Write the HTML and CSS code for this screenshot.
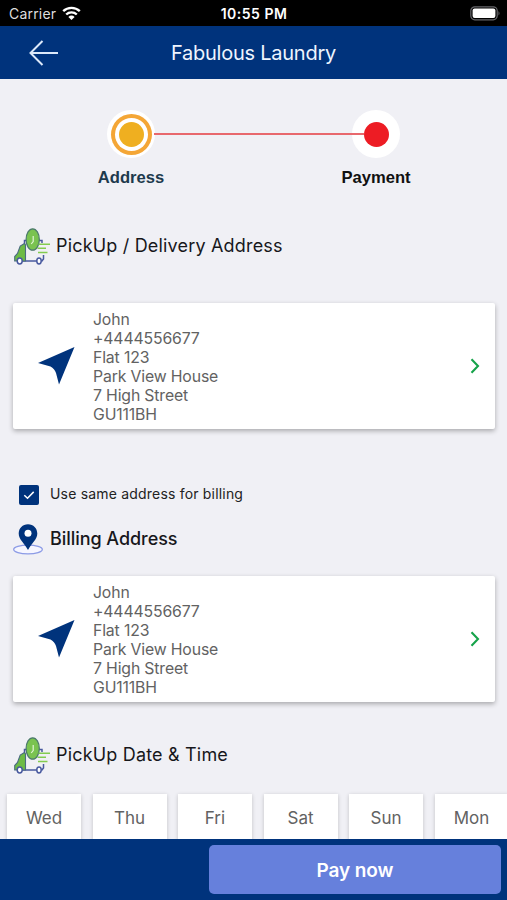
FILE: index.html
```html
<!DOCTYPE html>
<html lang="en">
<head>
    <meta charset="UTF-8">
    <meta name="viewport" content="width=device-width, initial-scale=1.0">
    <title>Fabulous Laundry</title>
    <link rel="stylesheet" href="styles.css">
</head>
<body>
    <svg width="0" height="0" class="symbols">
        <symbol id="van" viewBox="0 0 38 38">
            <path d="M11.500 17v-4.500H29V15M30.500 27v4l-2 2.500M8 33h20" fill="none" stroke="#48599f" stroke-width="1.500"/>
            <path d="M11.500 15.500L7.200 18 4.500 25.500 1.700 28.500V33h10.800V17z" fill="#6dbb45" stroke="#4a6b80" stroke-width="1.100"/>
            <ellipse cx="19.700" cy="11.500" rx="6.600" ry="10.700" fill="#7ac350" stroke="#4c7a6b" stroke-width="1.200"/>
            <path d="M20.200 8v5.500l-2 2.500" fill="none" stroke="#e3f5d5" stroke-width="1.200"/>
            <path d="M25.500 16.200H37M24.500 20.300H33M25 24.500h9.500" stroke="#83cc50" stroke-width="1.600"/>
            <ellipse cx="6.700" cy="33" rx="2.500" ry="2.900" fill="#fff" stroke="#48599f" stroke-width="1.500"/>
            <ellipse cx="26" cy="33" rx="2.200" ry="2.900" fill="#fff" stroke="#48599f" stroke-width="1.500"/>
        </symbol>
        <symbol id="arrow" viewBox="0 0 38 38">
            <path d="M36.500 0L21 37.500 18 26Q16.500 21.500 12.500 19.500L0 16z" fill="#00337c"/>
        </symbol>
        <symbol id="chevron" viewBox="0 0 10 16">
            <path d="M1.500 1.200L8 8l-6.500 6.800" fill="none" stroke="#16a34a" stroke-width="2.100"/>
        </symbol>
    </svg>

    <div class="status">
        <span class="carrier">Carrier</span>
        <svg class="wifi" width="19" height="15" viewBox="0 0 19 15">
            <path d="M1.200 5.200a12 12 0 0 1 16.600 0M4.200 8.500a7.600 7.600 0 0 1 10.600 0" fill="none" stroke="#fff" stroke-width="2.400"/>
            <path d="M9.500 14L6.400 10.900a4.400 4.400 0 0 1 6.200 0z" fill="#fff"/>
        </svg>
        <span class="clock">10:55 PM</span>
        <svg class="battery" width="31" height="15" viewBox="0 0 31 15">
            <rect x="0.800" y="0.800" width="26.400" height="13" rx="4" fill="none" stroke="#66666a" stroke-width="1.200"/>
            <rect x="2.600" y="2.600" width="22.800" height="9.400" rx="2" fill="#fff"/>
            <path d="M28.500 5q2 2.300 0 4.600z" fill="#66666a"/>
        </svg>
    </div>

    <header class="header">
        <svg width="30" height="26" viewBox="0 0 30 26">
            <path d="M13.500 1L1.500 13l12 12M1.500 13H29" fill="none" stroke="#dce9fa" stroke-width="2"/>
        </svg>
        <h1>Fabulous Laundry</h1>
    </header>

    <main class="content">
        <div class="steps">
            <div class="step active">
                <div class="dot"><i></i></div>
                <span class="step-label">Address</span>
            </div>
            <div class="line"></div>
            <div class="step">
                <div class="dot"><i></i></div>
                <span class="step-label">Payment</span>
            </div>
        </div>

        <div class="heading pickup">
            <svg width="38" height="38"><use href="#van"/></svg>
            <h2>PickUp / Delivery Address</h2>
        </div>

        <div class="card">
            <svg width="38" height="38"><use href="#arrow"/></svg>
            <p>John<br>+4444556677<br>Flat 123<br>Park View House<br>7 High Street<br>GU111BH</p>
            <svg width="10" height="16"><use href="#chevron"/></svg>
        </div>

        <div class="same-address">
            <svg width="20" height="20" viewBox="0 0 20 20">
                <rect width="20" height="20" rx="2" fill="#00337c"/>
                <path d="M5.300 10.200l3.200 3 6.200-6.300" fill="none" stroke="#fff" stroke-width="1.500"/>
            </svg>
            <span>Use same address for billing</span>
        </div>

        <div class="heading billing">
            <svg width="30" height="31" viewBox="0 0 30 31">
                <ellipse cx="15" cy="25.500" rx="14.300" ry="4.300" fill="#f6f6ff" stroke="#8c9be6" stroke-width="1.300"/>
                <path d="M15 0.200c-5.400 0-9.300 4-9.300 9.300 0 6 6 10 9.300 16.500 3.300-6.500 9.300-10.500 9.300-16.500 0-5.300-3.900-9.300-9.300-9.300z" fill="#00337c"/>
                <circle cx="15" cy="9.300" r="3.500" fill="#fff"/>
            </svg>
            <h2>Billing Address</h2>
        </div>

        <div class="card">
            <svg width="38" height="38"><use href="#arrow"/></svg>
            <p>John<br>+4444556677<br>Flat 123<br>Park View House<br>7 High Street<br>GU111BH</p>
            <svg width="10" height="16"><use href="#chevron"/></svg>
        </div>

        <div class="heading date">
            <svg width="38" height="38"><use href="#van"/></svg>
            <h2>PickUp Date &amp; Time</h2>
        </div>

        <div class="days">
            <div class="day">Wed</div>
            <div class="day">Thu</div>
            <div class="day">Fri</div>
            <div class="day">Sat</div>
            <div class="day">Sun</div>
            <div class="day">Mon</div>
        </div>
    </main>

    <footer class="footer">
        <button type="button">Pay now</button>
    </footer>
</body>
</html>
```
FILE: styles.css
```css
* {
    box-sizing: border-box;
}
body {
    margin: 0;
    height: 900px;
    display: flex;
    flex-direction: column;
    overflow: hidden;
    background: #f0f0f5;
    font-family: Inter, "Liberation Sans", sans-serif;
}
h1, h2, p {
    margin: 0;
}
svg {
    display: block;
    flex: none;
}
.symbols {
    position: absolute;
}
.status {
    height: 26px;
    flex: none;
    display: grid;
    grid-template-columns: 53px 144px 96px 1fr;
    align-items: center;
    padding: 1px 6px 0 9px;
    background: #000;
    color: #fff;
    font-size: 14px;
}
.carrier {
    color: #dedede;
    letter-spacing: 0.2px;
}
.wifi, .battery {
    margin-top: -1px;
}
.clock {
    font-weight: 600;
    letter-spacing: 0.5px;
    text-align: center;
    white-space: nowrap;
}
.battery {
    justify-self: end;
}
.header {
    height: 53px;
    flex: none;
    display: grid;
    grid-template-columns: 30px 1fr 30px;
    align-items: center;
    padding: 0 29px;
    background: #00337c;
    color: #eef5ff;
}
.header h1 {
    font-size: 20px;
    font-weight: 400;
    letter-spacing: -0.25px;
    text-align: center;
}
.content {
    flex: 1;
    min-height: 0;
    overflow: hidden;
}
.steps {
    display: flex;
    padding: 31px 107px 0;
}
.step {
    width: 48px;
    display: flex;
    flex-direction: column;
    align-items: center;
}
.dot {
    width: 48px;
    height: 48px;
    flex: none;
    display: flex;
    align-items: center;
    justify-content: center;
    border-radius: 50%;
    background: #fff;
}
.dot i {
    width: 25px;
    height: 25px;
    border-radius: 50%;
    background: #ed1c24;
}
.active .dot i {
    background: #efaf20;
    box-shadow: 0 0 0 4px #fff, 0 0 0 8px #f4a636;
}
.line {
    flex: 1;
    height: 2px;
    margin: 23px -12px 0 -1px;
    background: #e8686d;
    z-index: 1;
}
.step-label {
    margin-top: 10px;
    font: bold 16.6px/20px "Liberation Sans", sans-serif;
    color: #111;
}
.active .step-label {
    color: #1d3a4d;
}
.heading {
    display: flex;
    align-items: center;
    padding-left: 13px;
}
.heading h2 {
    font-size: 18px;
    font-weight: 400;
    line-height: 24px;
    color: #17171b;
    white-space: nowrap;
}
.pickup {
    height: 38px;
    margin-top: 40px;
}
.pickup h2, .date h2 {
    margin: -3px 0 0 5px;
    letter-spacing: 0.18px;
}
.card {
    height: 126px;
    margin: 0 12px 0 13px;
    padding: 0 15px 0 25px;
    display: flex;
    align-items: center;
    background: #fff;
    border-radius: 2px;
    box-shadow: 0 2px 5px rgba(0, 0, 0, 0.3);
}
.pickup + .card {
    margin-top: 37px;
}
.card p {
    flex: 1;
    margin-left: 17px;
    padding-top: 4px;
    font-size: 15.8px;
    letter-spacing: -0.15px;
    line-height: 18.9px;
    color: #626262;
}
.same-address {
    display: flex;
    align-items: center;
    gap: 11px;
    margin-top: 56px;
    padding-left: 19px;
    font-size: 14px;
    letter-spacing: 0.19px;
    line-height: 20px;
    color: #222;
}
.same-address span {
    margin-top: -2px;
}
.billing {
    height: 31px;
    margin-top: 19px;
}
.billing h2 {
    margin: -2px 0 0 7px;
    font-weight: 500;
    letter-spacing: -0.05px;
}
.billing + .card {
    margin-top: 21px;
}
.date {
    height: 38px;
    margin-top: 35px;
}
.days {
    display: flex;
    gap: 11.5px;
    margin-top: 19px;
    padding-left: 7px;
}
.day {
    width: 74px;
    height: 80px;
    flex: none;
    padding-top: 13px;
    background: #fff;
    box-shadow: 0 1px 4px rgba(0, 0, 0, 0.2);
    font-size: 17px;
    line-height: 22px;
    text-align: center;
    color: #626262;
}
.footer {
    height: 61px;
    flex: none;
    padding: 6px 6px 0;
    display: flex;
    justify-content: flex-end;
    background: #00337c;
    z-index: 1;
}
.footer button {
    width: 292px;
    height: 49px;
    padding: 1px 0 0;
    border: none;
    border-radius: 5px;
    background: #6680dc;
    color: #fff;
    font: 600 19px Inter, sans-serif;
    letter-spacing: -0.1px;
}
```
